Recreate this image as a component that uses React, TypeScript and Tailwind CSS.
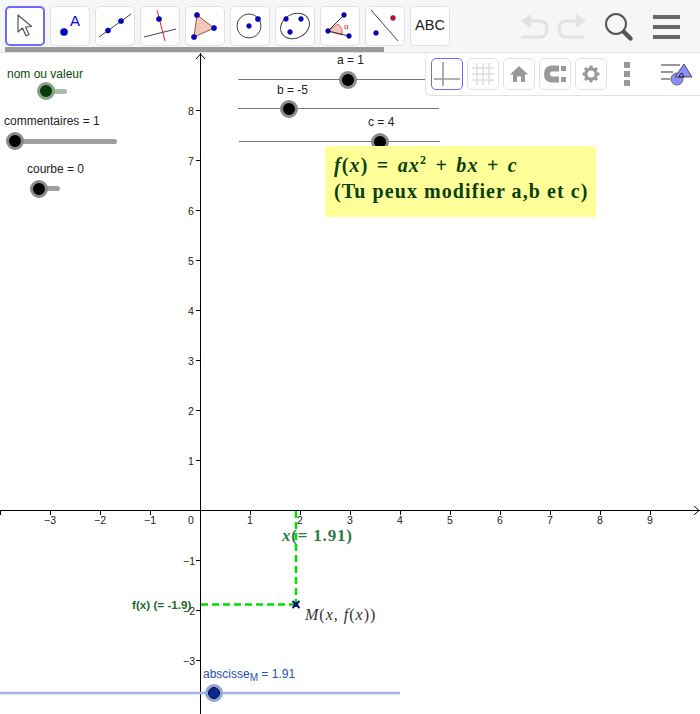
import React from 'react';
import { ReactNode } from 'react';

const blue = '#0000d8';

function ToolButton({ active, children }: { active?: boolean; children: ReactNode }) {
  return (
    <div
      className={`w-10 h-10 shrink-0 rounded-[5px] bg-white flex items-center justify-center ${
        active ? 'border-2 border-[#6b6bff]' : 'border border-[#e0e0e0]'
      }`}
    >
      {children}
    </div>
  );
}

function Icon({ children }: { children: ReactNode }) {
  return (
    <svg width="40" height="40" viewBox="0 0 40 40" className="shrink-0">
      {children}
    </svg>
  );
}

function Dot({ x, y, r = 3.4, fill = blue }: { x: number; y: number; r?: number; fill?: string }) {
  return <circle cx={x} cy={y} r={r} fill={fill} stroke="#1a1a50" strokeWidth="0.6" />;
}

function MiniButton({ active, children }: { active?: boolean; children: ReactNode }) {
  return (
    <div
      className={`w-8 h-8 shrink-0 rounded-[5px] bg-white flex items-center justify-center border ${
        active ? 'border-[#6b6bff]' : 'border-[#e0e0e0]'
      }`}
    >
      {children}
    </div>
  );
}

function Toolbar() {
  return (
    <div className="h-[53px] bg-[#f6f6f6] border-b border-[#e2e2e2] relative">
      <div className="flex items-start gap-[5px] pl-[5px] pt-[6px]">
        <ToolButton active>
          <svg width="18" height="26" viewBox="0 0 18 26">
            <path d="M2 2 L2 19 L6.5 15 L10 23 L13 21.5 L9.6 14 L15.5 13.5 Z" fill="#fff" stroke="#555" strokeWidth="1.2" strokeLinejoin="round" />
          </svg>
        </ToolButton>
        <ToolButton>
          <Icon>
            <Dot x={14} y={26} r={3.6} />
            <text x="20" y="20" fontSize="15" fill="#0000ee" fontFamily="Liberation Sans, sans-serif">A</text>
          </Icon>
        </ToolButton>
        <ToolButton>
          <Icon>
            <line x1="4" y1="31" x2="36" y2="8" stroke="#444" strokeWidth="1" />
            <Dot x={13} y={24.5} r={2.6} />
            <Dot x={26} y={15} r={2.6} />
          </Icon>
        </ToolButton>
        <ToolButton>
          <Icon>
            <line x1="4" y1="31" x2="36" y2="23" stroke="#444" strokeWidth="1" />
            <line x1="17" y1="4" x2="25" y2="35" stroke="#e02020" strokeWidth="1" />
            <Dot x={19} y={13} r={2.6} />
          </Icon>
        </ToolButton>
        <ToolButton>
          <Icon>
            <path d="M12 9 L29 22 L9 31 Z" fill="#f0c8bc" stroke="#a05040" strokeWidth="1" />
            <Dot x={12} y={9} r={2.6} />
            <Dot x={29} y={22} r={2.6} />
            <Dot x={9} y={31} r={2.6} />
          </Icon>
        </ToolButton>
        <ToolButton>
          <Icon>
            <circle cx="19" cy="20" r="12" fill="none" stroke="#444" strokeWidth="1" />
            <Dot x={19} y={20} r={2.4} />
            <Dot x={28} y={13} r={2.6} />
          </Icon>
        </ToolButton>
        <ToolButton>
          <Icon>
            <ellipse cx="20" cy="20" rx="15" ry="12" transform="rotate(-28 20 20)" fill="none" stroke="#444" strokeWidth="1" />
            <Dot x={11} y={13} r={2.4} />
            <Dot x={26} y={13} r={2.4} />
            <Dot x={15} y={26} r={2.4} />
          </Icon>
        </ToolButton>
        <ToolButton>
          <Icon>
            <path d="M8 25 L18 18 A12 12 0 0 1 22 29 Z" fill="#f0c8bc" stroke="#e04040" strokeWidth="0.8" />
            <line x1="8" y1="25" x2="24" y2="9" stroke="#333" strokeWidth="1" />
            <line x1="8" y1="25" x2="29" y2="30" stroke="#333" strokeWidth="1" />
            <Dot x={24} y={9} r={2.4} />
            <Dot x={8} y={25} r={2.4} />
            <Dot x={29} y={30} r={2.4} />
            <text x="24" y="23" fontSize="9" fill="#e02020" fontFamily="Liberation Serif, serif">α</text>
          </Icon>
        </ToolButton>
        <ToolButton>
          <Icon>
            <line x1="6" y1="4" x2="33" y2="35" stroke="#444" strokeWidth="1" />
            <Dot x={28} y={12} r={2.4} fill="#e01010" />
            <Dot x={11} y={27} r={2.4} />
          </Icon>
        </ToolButton>
        <ToolButton>
          <span className="text-[14.5px] text-[#222] font-['Liberation_Sans',sans-serif]">ABC</span>
        </ToolButton>
      </div>
      {/* undo / redo / search / menu */}
      <div className="absolute left-[518px] top-[12px] flex items-center">
        <svg width="70" height="30" viewBox="0 0 70 30">
          <path d="M3 9 L13 2 L13 16 Z" fill="#e2e2e2" />
          <path d="M10 9 H22 Q29 9 29 17 Q29 25 22 25 H3" fill="none" stroke="#e2e2e2" strokeWidth="3" />
          <path d="M68 9 L58 2 L58 16 Z" fill="#e2e2e2" />
          <path d="M61 9 H48 Q41 9 41 17 Q41 25 48 25 H66" fill="none" stroke="#e2e2e2" strokeWidth="3" />
        </svg>
      </div>
      <svg width="32" height="32" viewBox="0 0 32 32" className="absolute left-[603px] top-[11px]">
        <circle cx="13" cy="13" r="10" fill="none" stroke="#555" strokeWidth="2" />
        <line x1="21" y1="21" x2="27.5" y2="27.5" stroke="#555" strokeWidth="4.5" strokeLinecap="round" />
      </svg>
      <div className="absolute left-[653px] top-[15px] w-[27px] flex flex-col gap-[6.5px]">
        <div className="h-[3.5px] bg-[#666]" />
        <div className="h-[3.5px] bg-[#666]" />
        <div className="h-[3.5px] bg-[#666]" />
      </div>
      <div className="absolute left-[5px] top-[47px] w-[379px] h-[5px] bg-[#9b9b9b]" />
    </div>
  );
}

function StylePanel() {
  return (
    <div className="absolute right-0 top-0 w-[275px] h-[43px] bg-white border-l border-b border-[#e2e2e2] rounded-bl-[6px] flex items-center pl-[5px] gap-1 z-10">
      <MiniButton active>
        <svg width="28" height="28" viewBox="0 0 28 28">
          <path d="M10 2 V26 M1 19 H27" stroke="#999" strokeWidth="1.6" fill="none" />
        </svg>
      </MiniButton>
      <MiniButton>
        <svg width="28" height="28" viewBox="0 0 28 28">
          <path d="M8 3 V25 M14 3 V25 M20 3 V25 M3 8 H25 M3 14 H25 M3 20 H25" stroke="#e0e0e0" strokeWidth="1.6" fill="none" />
        </svg>
      </MiniButton>
      <MiniButton>
        <svg width="20" height="20" viewBox="0 0 20 20">
          <path d="M10 2 L1 10.5 H4 V18 H8 V12.5 H12 V18 H16 V10.5 H19 Z" fill="#999" />
        </svg>
      </MiniButton>
      <MiniButton>
        <svg width="26" height="22" viewBox="0 0 26 22">
          <path d="M17 5.5 H10 Q5 5.5 5 11 Q5 16.5 10 16.5 H17" fill="none" stroke="#999" strokeWidth="6" />
          <path d="M19 3 H24 V8 H19 Z M19 14 H24 V19 H19 Z" fill="#999" />
        </svg>
      </MiniButton>
      <MiniButton>
        <svg width="20" height="20" viewBox="0 0 20 20">
          <circle cx="10" cy="10" r="5.2" fill="none" stroke="#999" strokeWidth="3.2" />
          <path d="M10 1.5 V4.5 M10 15.5 V18.5 M1.5 10 H4.5 M15.5 10 H18.5 M4 4 L6 6 M14 14 L16 16 M16 4 L14 6 M6 14 L4 16" stroke="#999" strokeWidth="3" />
        </svg>
      </MiniButton>
      <div className="w-[32px] flex flex-col items-center gap-[3px]">
        <div className="w-[5.5px] h-[6px] bg-[#999]" />
        <div className="w-[5.5px] h-[6px] bg-[#999]" />
        <div className="w-[5.5px] h-[6px] bg-[#999]" />
      </div>
      <svg width="34" height="28" viewBox="0 0 34 28" className="ml-[13px]">
        <path d="M1 5 H20 M1 12 H13 M1 19 H10" stroke="#999" strokeWidth="2" />
        <circle cx="17" cy="19" r="6" fill="#8c8cff" stroke="#666" strokeWidth="1" />
        <path d="M24 4 L32 17 H15 Z" fill="#8c8cff" stroke="#555" strokeWidth="1" />
        <path d="M19 17 A5 5 0 0 1 22 13 L24 17 Z" fill="none" stroke="#222" strokeWidth="1" />
      </svg>
    </div>
  );
}

// positions below are canvas coords, canvas starts at y=53
const xTicks = [-3, -2, -1, 1, 2, 3, 4, 5, 6, 7, 8, 9];
const yTicks = [8, 7, 6, 5, 4, 3, 2, 1, -1, -2, -3];
const px = (v: number) => 200 + v * 50;
const py = (v: number) => 457 - v * 50;

function Axes() {
  return (
    <svg width="700" height="661" viewBox="0 0 700 661" className="absolute left-0 top-0">
      <line x1="200.5" y1="0" x2="200.5" y2="661" stroke="#000" strokeWidth="1" />
      <path d="M196 6 L200.5 1 L205 6" fill="none" stroke="#000" strokeWidth="1" />
      <line x1="0" y1="457.5" x2="700" y2="457.5" stroke="#000" strokeWidth="1" />
      <path d="M694 453 L699 457.5 L694 462" fill="none" stroke="#000" strokeWidth="1" />
      <line x1="0.5" y1="457" x2="0.5" y2="462" stroke="#000" />
      {xTicks.map((t) => (
        <line key={t} x1={px(t) + 0.5} y1="457" x2={px(t) + 0.5} y2="462" stroke="#000" />
      ))}
      {yTicks.map((t) => (
        <line key={t} x1="196" y1={py(t) + 0.5} x2="200" y2={py(t) + 0.5} stroke="#000" />
      ))}
      {/* a b c sliders */}
      <line x1="238" y1="26.5" x2="425" y2="26.5" stroke="#777" />
      <line x1="238" y1="55.5" x2="439" y2="55.5" stroke="#777" />
      <line x1="239" y1="88.5" x2="440" y2="88.5" stroke="#777" />
      {/* dashed construction lines */}
      <line x1="296" y1="458" x2="296" y2="551" stroke="#00dd00" strokeWidth="2.5" strokeDasharray="7 4" />
      <line x1="201" y1="551.5" x2="296" y2="551.5" stroke="#00dd00" strokeWidth="2.5" strokeDasharray="7 4" />
      <path d="M292.5 548 L299.5 555 M299.5 548 L292.5 555" stroke="#00106e" strokeWidth="2" />
      <circle cx="296" cy="551.5" r="2.4" fill="#00106e" />
      {/* abscisse slider line */}
      <line x1="0" y1="640" x2="400" y2="640" stroke="#a4b4e0" strokeWidth="2.5" />
    </svg>
  );
}

function Knob({ x, y, fill = '#000', ring = '#8a8a8a' }: { x: number; y: number; fill?: string; ring?: string }) {
  return (
    <div
      className="absolute w-[12px] h-[12px] rounded-full box-content border-[3px]"
      style={{ left: x - 9, top: y - 9, background: fill, borderColor: ring }}
    />
  );
}

function Label({ x, y, className, children }: { x: number; y: number; className: string; children: ReactNode }) {
  return (
    <span className={`absolute whitespace-nowrap leading-none ${className}`} style={{ left: x, top: y }}>
      {children}
    </span>
  );
}

const sans = "font-['Liberation_Sans',sans-serif]";
const serif = "font-['Liberation_Serif',serif]";

export default function App() {
  return (
    <div className="w-[700px] h-[714px] bg-white overflow-hidden relative">
      <Toolbar />
      <div className="relative w-[700px] h-[661px]">
        <Axes />
        <StylePanel />

        {xTicks.map((t) => (
          <Label key={t} x={px(t) - (t < 0 ? 6 : 3)} y={462} className={`${sans} text-[10.5px] text-[#222]`}>
            {t < 0 ? `−${-t}` : t}
          </Label>
        ))}
        <Label x={188} y={462} className={`${sans} text-[10.5px] text-[#222]`}>0</Label>
        {yTicks.map((t) => (
          <Label key={t} x={t < 0 ? 183 : 188} y={py(t) - 4} className={`${sans} text-[10.5px] text-[#222]`}>
            {t < 0 ? `−${-t}` : t}
          </Label>
        ))}

        {/* left sliders */}
        <Label x={7} y={15} className={`${sans} text-[12px] text-[#0c4a0c]`}>nom ou valeur</Label>
        <div className="absolute left-[45px] top-[35.5px] w-[22px] h-[5px] rounded-full bg-[#a6bda6]" />
        <Knob x={45.5} y={38} fill="#0a3a0a" ring="#8aa08a" />

        <Label x={4} y={62} className={`${sans} text-[12px] text-[#222]`}>commentaires = 1</Label>
        <div className="absolute left-[15px] top-[85.5px] w-[102px] h-[5px] rounded-full bg-[#9e9e9e]" />
        <Knob x={15} y={88} />

        <Label x={27} y={110} className={`${sans} text-[12px] text-[#222]`}>courbe = 0</Label>
        <div className="absolute left-[38px] top-[133px] w-[22px] h-[5px] rounded-full bg-[#9e9e9e]" />
        <Knob x={38.5} y={135.5} />

        {/* a b c */}
        <Label x={337} y={1} className={`${sans} text-[12px] text-[#222]`}>a = 1</Label>
        <Knob x={348} y={26.5} />
        <Label x={277} y={31} className={`${sans} text-[12px] text-[#222]`}>b = -5</Label>
        <Knob x={288.5} y={55.5} />
        <Label x={368} y={63} className={`${sans} text-[12px] text-[#222]`}>c = 4</Label>
        <Knob x={379.5} y={88.5} />

        {/* yellow note */}
        <div className={`absolute left-[325px] top-[93px] w-[271px] h-[71px] bg-[#ffff99] text-[#0a400a] pl-[9px] pt-[6px] font-bold ${serif}`}>
          <div className="text-[20px] h-[26px] leading-[26px] tracking-[1.1px] [word-spacing:2.3px] whitespace-nowrap">
            <i>f</i>(<i>x</i>) = <i>ax</i><span className="text-[12px] relative -top-[8px]">2</span> + <i>bx</i> + <i>c</i>
          </div>
          <div className="text-[20px] leading-[26px] tracking-[1.07px] whitespace-nowrap">(Tu peux modifier a,b et c)</div>
        </div>

        {/* labels near the point */}
        <Label x={282} y={474} className={`${serif} text-[17px] font-bold text-[#2d7a4a] tracking-[0.8px]`}>
          <i>x</i>(= 1.91)
        </Label>
        <Label x={132} y={546} className={`${sans} text-[11.7px] font-bold text-[#1c6a30]`}>f(x) (= -1.9)</Label>
        <Label x={305} y={554} className={`${serif} text-[16px] text-[#333] tracking-[1px]`}>
          <i>M</i>(<i>x</i>, <i>f</i>(<i>x</i>))
        </Label>

        {/* abscisse slider */}
        <Label x={203} y={615} className={`${sans} text-[12px] text-[#2a50b0]`}>
          abscisse<sub className="text-[10px]">M</sub> = 1.91
        </Label>
        <div
          className="absolute w-[12px] h-[12px] rounded-full border-[3px] border-[#8fa4dc] box-content"
          style={{ left: 214 - 9, top: 640 - 9 }}
        >
          <div className="w-full h-full rounded-full bg-[#0a2a96] border border-black" />
        </div>
      </div>
    </div>
  );
}
